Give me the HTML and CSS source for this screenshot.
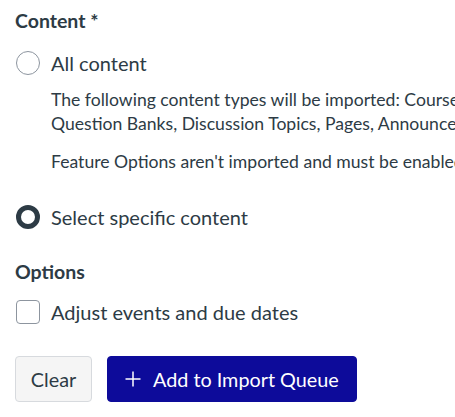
FILE: index.html
```html
<!DOCTYPE html>
<html lang="en">
<head>
<meta charset="utf-8">
<title>Import Content</title>
<link rel="stylesheet" href="styles.css">
</head>
<body>
<div class="page">
  <fieldset class="group">
    <legend class="group-title">Content *</legend>
    <label class="choice">
      <span class="radio"></span>
      <span class="choice-label">All content</span>
    </label>
    <div class="desc">
      <p class="desc-line">The following content types will be imported: Course Settings, Syllabus Body, Modules, Assignments, Quizzes,<br>Question Banks, Discussion Topics, Pages, Announcements, Rubrics, Files, Calendar Events</p>
      <p class="desc-line gap">Feature Options aren't imported and must be enabled manually in the destination course.</p>
    </div>
    <label class="choice choice-2">
      <span class="radio radio-on"></span>
      <span class="choice-label">Select specific content</span>
    </label>
  </fieldset>
  <fieldset class="group options">
    <legend class="group-title">Options</legend>
    <label class="choice">
      <span class="checkbox"></span>
      <span class="choice-label">Adjust events and due dates</span>
    </label>
  </fieldset>
  <div class="actions">
    <button class="btn btn-secondary" type="button">Clear</button>
    <button class="btn btn-primary" type="button"><svg class="plus" viewBox="0 0 16 16" width="16" height="16" aria-hidden="true"><path d="M8 0.5v15M0.5 8h15" stroke="#fff" stroke-width="1.5" fill="none"/></svg><span>Add to Import Queue</span></button>
  </div>
</div>
</body>
</html>
```
FILE: styles.css
```css
html, body {
  margin: 0;
  padding: 0;
  background: #ffffff;
  overflow: hidden;
}
body {
  font-family: Lato, "Open Sans", "Liberation Sans", sans-serif;
  color: #2d3b45;
}
.page {
  padding: 9px 15px 0 15px;
  white-space: nowrap;
  overflow: hidden;
  width: 440px;
}
.group {
  border: 0;
  margin: 0;
  padding: 0;
  min-width: 0;
}
.group-title {
  padding: 0;
  font-size: 19.5px;
  font-weight: 700;
  line-height: 24px;
  margin: 0 0 18px 0;
}
.choice {
  display: flex;
  align-items: center;
  gap: 11px;
  height: 24px;
  margin-left: 1px;
}
.choice-label {
  font-size: 20px;
  line-height: 24px;
}
.radio {
  flex: none;
  width: 24px;
  height: 24px;
  box-sizing: border-box;
  border: 1px solid #8d959f;
  border-radius: 50%;
  background: #fff;
}
.radio-on {
  border: 5px solid #2d3b45;
}
.desc {
  padding-left: 36px;
  margin-top: 13px;
}
.desc-line {
  margin: 0;
  font-size: 17.6px;
  line-height: 24px;
}
.desc-line.gap {
  margin-top: 14px;
}
.choice-2 {
  margin-top: 31px;
}
.options {
  margin-top: 31px;
}
.options .group-title {
  margin-bottom: 16px;
}
.checkbox {
  flex: none;
  width: 24px;
  height: 24px;
  box-sizing: border-box;
  border: 1px solid #8d959f;
  border-radius: 4px;
  background: #fff;
}
.actions {
  display: flex;
  gap: 15px;
  margin-top: 32px;
}
.btn {
  font-family: inherit;
  font-size: 19.8px;
  height: 46px;
  box-sizing: border-box;
  border-radius: 4px;
  padding: 0 15px;
  display: inline-flex;
  align-items: center;
  gap: 12px;
  cursor: pointer;
}
.btn-secondary {
  background: #f5f5f5;
  color: #2d3b45;
  border: 1px solid #d7dade;
  width: 77px;
  justify-content: center;
}
.btn-primary {
  background: #0d0b9a;
  color: #ffffff;
  border: 1px solid #0d0b9a;
  padding: 0 15px 0 17px;
  width: 250px;
}
.plus {
  flex: none;
}
```
